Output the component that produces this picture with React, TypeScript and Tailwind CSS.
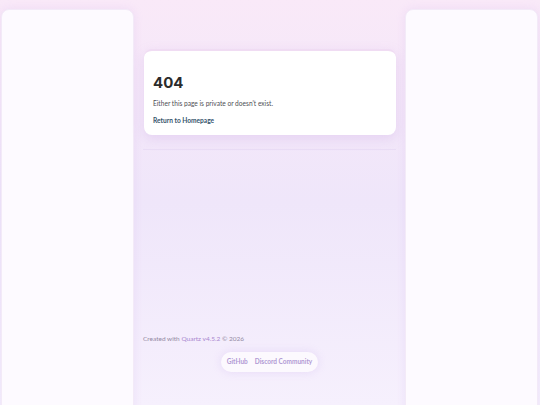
import React from 'react';

const font = { fontFamily: '"Lato", "Noto Sans", sans-serif' };

function SidePanel() {
  return (
    <aside className="w-[133px] h-[420px] shrink-0 rounded-lg bg-[#fdfaff] border border-[#f3eaf8] shadow-[0_0_10px_rgba(200,165,235,0.2)]" />
  );
}

export default function App() {
  return (
    <div
      className="w-full h-[405px] overflow-hidden flex gap-[9px] pl-[1px] pt-[9px] bg-gradient-to-b from-[#f9e9f8] via-[#efe6fa] to-[#f6f0fd]"
      style={font}
    >
      <SidePanel />

      <main className="w-[253px] h-[396px] shrink-0 flex flex-col pt-[40px] pb-[33px]">
        <div className="ml-[1px] rounded-lg bg-white border-t-2 border-[#f0dcf3] shadow-[0_4px_12px_rgba(190,150,225,0.25)] pl-[9px] pt-[22px] pb-[10px]">
          <h1 className="text-[15px] leading-[20px] font-bold text-[#2b2b2b]" style={{ fontFamily: '"Inter", sans-serif' }}>
            404
          </h1>
          <p className="mt-[5px] text-[6.6px] leading-[10px] text-[#4e4e55]">
            Either this page is private or doesn't exist.
          </p>
          <a className="block mt-[7px] text-[6.6px] leading-[10px] font-bold text-[#34536b]">
            Return to Homepage
          </a>
        </div>

        <div className="mt-[14px] h-px bg-[#e9dcf5]" />

        <footer className="mt-auto flex flex-col items-center">
          <p className="self-start text-[6.5px] leading-[10px] text-[#938aa3]">
            Created with <span className="text-[#a986cf]">Quartz v4.5.2</span> © 2026
          </p>
          <div className="mt-[8px] h-[20px] px-[6px] rounded-full bg-[#fcf9fe] shadow-[0_0_8px_rgba(200,170,235,0.3)] flex items-center gap-[7px] text-[6.5px] font-bold text-[#b199d4]">
            <span>GitHub</span>
            <span>Discord Community</span>
          </div>
        </footer>
      </main>

      <SidePanel />
    </div>
  );
}
